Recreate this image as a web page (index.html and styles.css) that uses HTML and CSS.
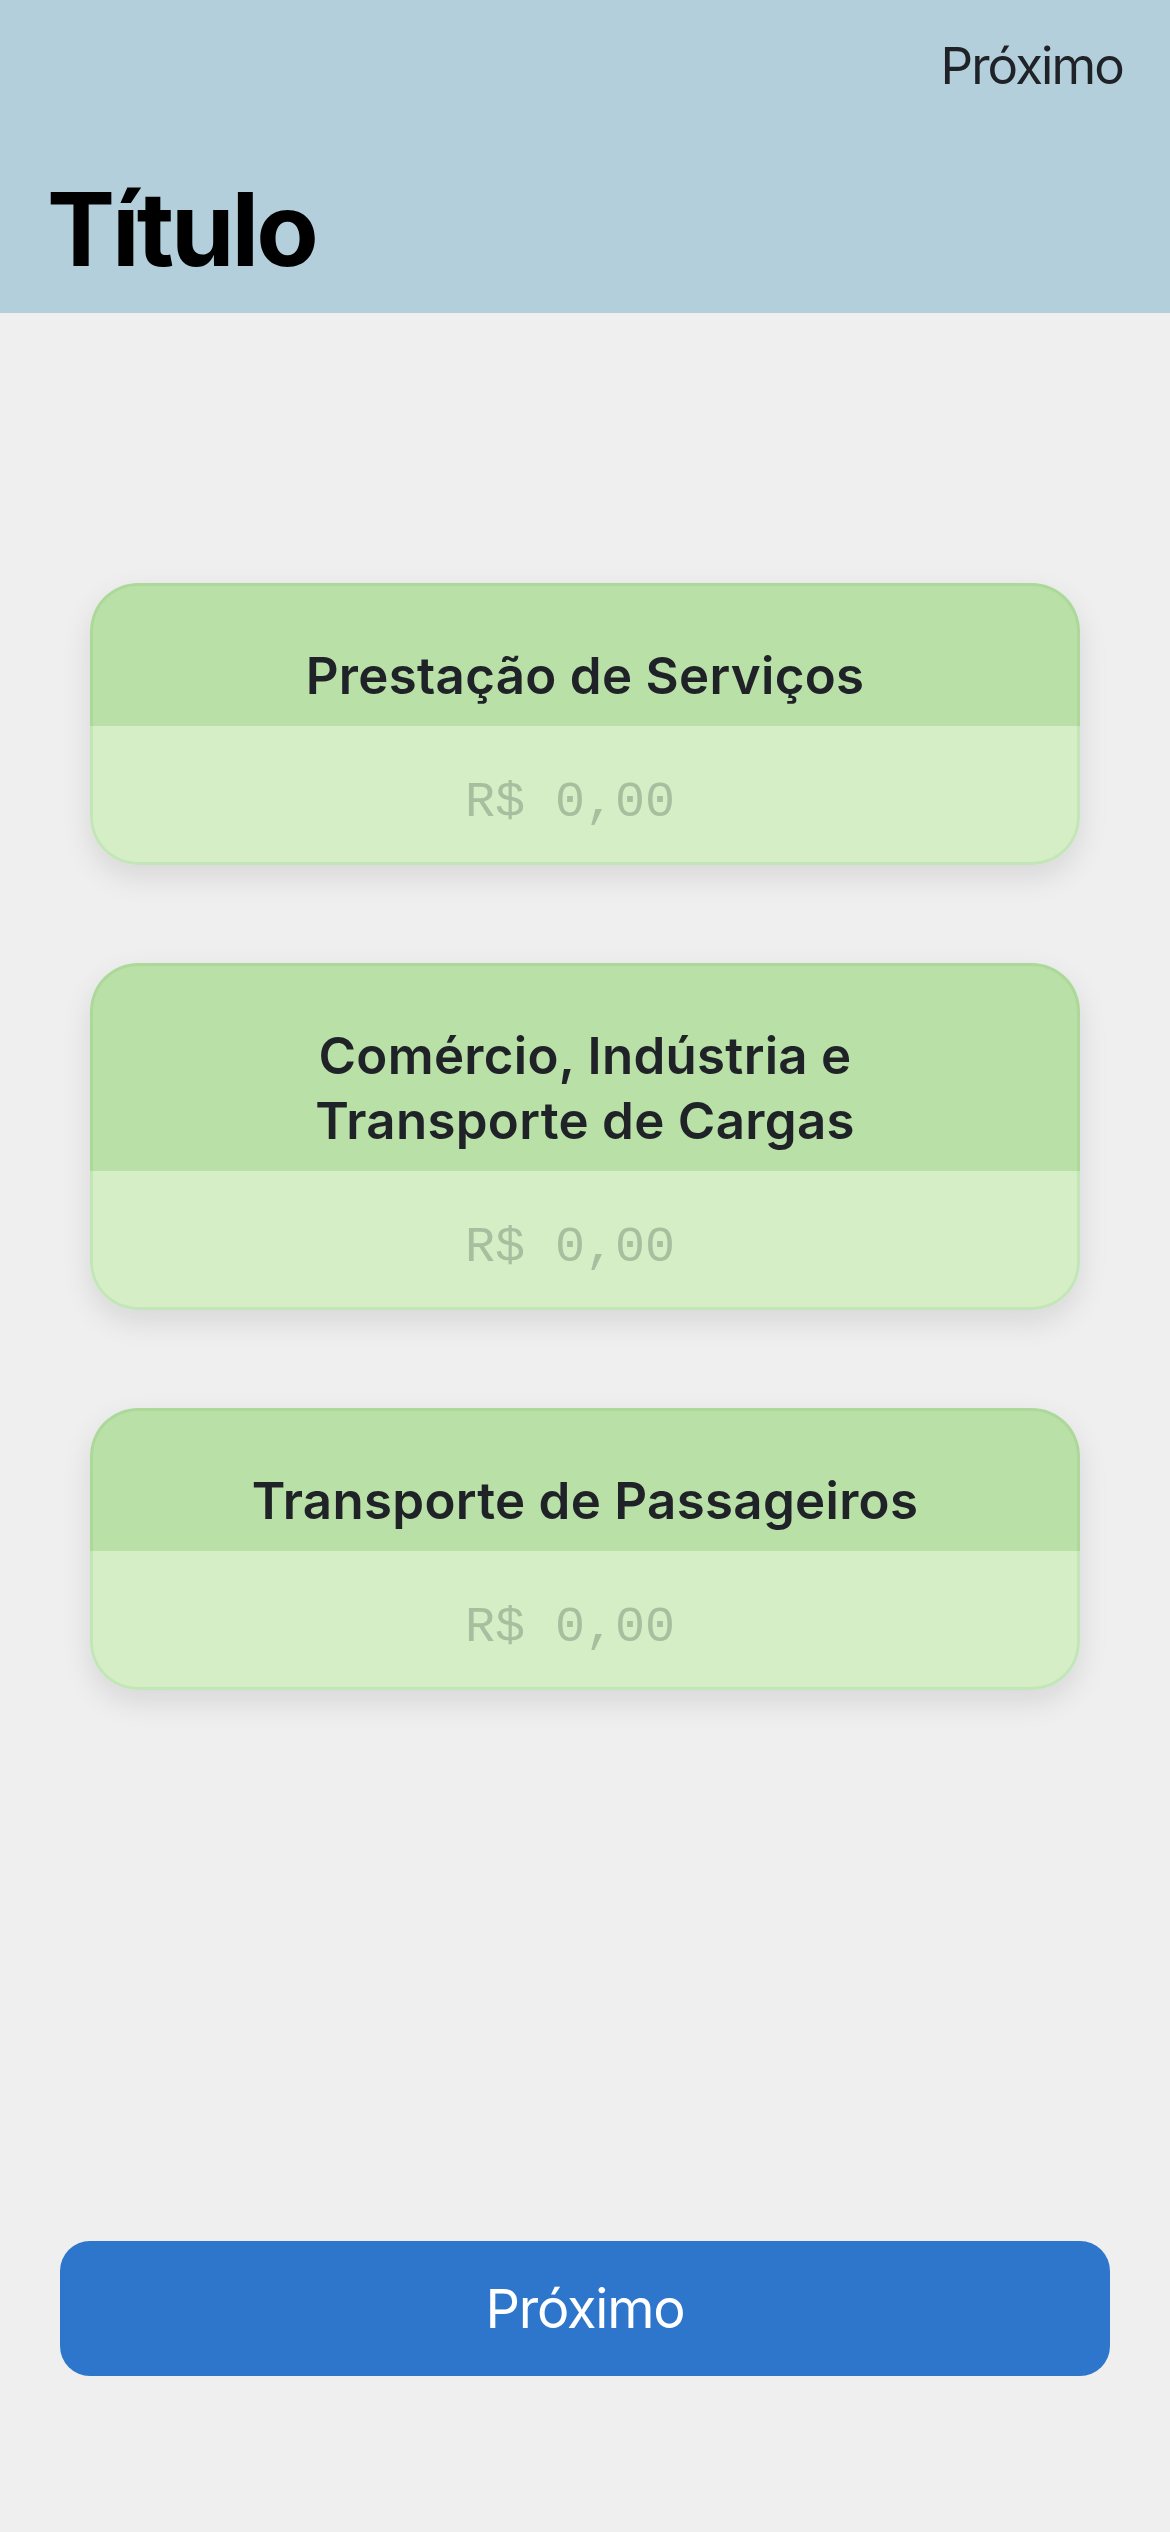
FILE: index.html
```html
<!DOCTYPE html>
<html lang="pt-BR">
<head>
<meta charset="utf-8">
<title>Título</title>
<link rel="stylesheet" href="styles.css">
</head>
<body>
<div class="screen">
  <header class="navbar">
    <div class="nav-row">
      <span class="nav-action">Próximo</span>
    </div>
    <h1 class="large-title">Título</h1>
  </header>

  <main class="content">
    <section class="card">
      <div class="card-head">Prestação de Serviços</div>
      <div class="card-body">R$ 0,00</div>
    </section>
    <section class="card">
      <div class="card-head">Comércio, Indústria e<br>Transporte de Cargas</div>
      <div class="card-body">R$ 0,00</div>
    </section>
    <section class="card">
      <div class="card-head">Transporte de Passageiros</div>
      <div class="card-body">R$ 0,00</div>
    </section>
  </main>

  <footer class="footer">
    <button class="primary-btn" type="button">Próximo</button>
  </footer>
</div>
</body>
</html>
```

FILE: styles.css
```css
html, body {
  margin: 0;
  padding: 0;
}

body {
  background: #efeff0;
  font-family: Inter, "Noto Sans", "Liberation Sans", sans-serif;
  color: #1f2227;
}

.screen {
  min-height: 2532px;
  display: flex;
  flex-direction: column;
}

.navbar {
  background: #b3cfdb;
  height: 313px;
  box-sizing: border-box;
  padding: 36px 47px 0 47px;
  display: flex;
  flex-direction: column;
}

.nav-row {
  display: flex;
  justify-content: flex-end;
  height: 60px;
}

.nav-action {
  font-size: 51px;
  line-height: 60px;
  font-weight: 400;
  color: #1f2227;
  letter-spacing: -1.9px;
}

.large-title {
  margin: 72px 0 0 0;
  font-size: 102px;
  line-height: 122px;
  font-weight: 700;
  color: #000;
  letter-spacing: -3px;
}

.content {
  flex: 1;
  padding: 270px 90px 0 90px;
  display: flex;
  flex-direction: column;
  gap: 98px;
}

.card {
  border-radius: 48px;
  box-shadow: 0 12px 30px rgba(0, 0, 0, 0.10);
}

.card-head {
  background: #b9e0a7;
  border: 3px solid #acd99a;
  border-bottom: none;
  border-radius: 48px 48px 0 0;
  padding: 57px 20px 18px 20px;
  text-align: center;
  font-size: 51px;
  line-height: 65px;
  font-weight: 600;
  color: #1f2227;
  letter-spacing: 0.3px;
}

.card-body {
  background: #d5eec6;
  border: 3px solid #c3e6b8;
  border-top: none;
  border-radius: 0 0 48px 48px;
  padding: 47px 50px 29px 20px;
  text-align: center;
  font-family: "Liberation Mono", "DejaVu Sans Mono", monospace;
  font-size: 50px;
  line-height: 60px;
  color: #a8bf9f;
}

.footer {
  padding: 0 60px 156px 60px;
}

.primary-btn {
  display: block;
  width: 100%;
  height: 135px;
  border: none;
  border-radius: 30px;
  background: #2e75cc;
  color: #fff;
  font-family: Inter, "Noto Sans", "Liberation Sans", sans-serif;
  font-size: 54px;
  font-weight: 400;
  letter-spacing: -1.2px;
}
```
